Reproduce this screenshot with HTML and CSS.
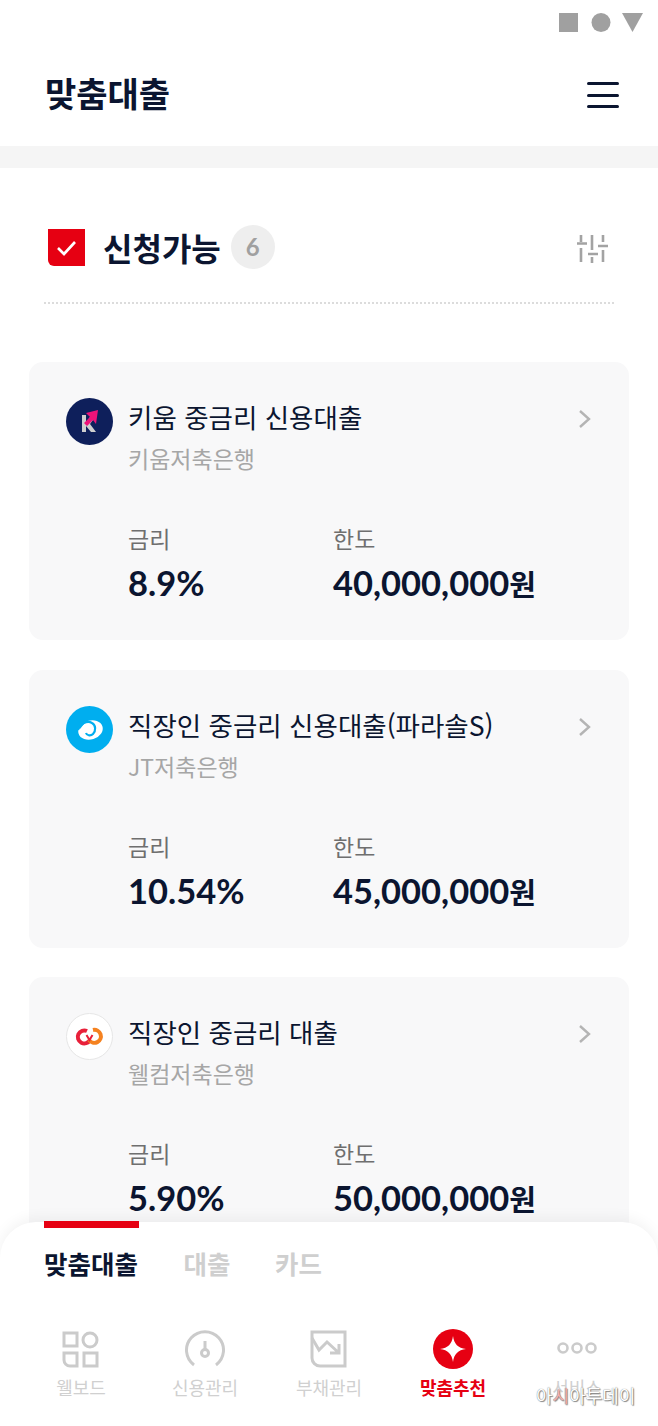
FILE: index.html
```html
<!DOCTYPE html>
<html lang="ko">
<head>
	<meta charset="UTF-8">
	<title>맞춤대출</title>
	<link rel="stylesheet" href="styles.css">
</head>
<body>
	<div class="status">
		<svg width="84" height="20" viewBox="0 0 84 20"><rect x="0" y="0" width="19" height="19" fill="#a0a0a0"/><circle cx="42" cy="9.500" r="9.500" fill="#a0a0a0"/><path d="M63 0h21L73.500 19z" fill="#a0a0a0"/></svg>
	</div>
	<div class="top">
		<h1>맞춤대출</h1>
		<div class="burger"><span></span><span></span><span></span></div>
	</div>
	<div class="band"></div>

	<div class="head">
		<div class="head-left">
			<svg class="check" width="37" height="37" viewBox="0 0 37 37"><path d="M0 0h37v37H6a6 6 0 0 1-6-6z" fill="#e60012"/><path d="M10 19l6 6 11-12" fill="none" stroke="#fff" stroke-width="2.6"/></svg>
			<strong>신청가능</strong>
			<span class="count">6</span>
		</div>
		<svg class="filter" width="32" height="30" viewBox="0 0 32 30" fill="none" stroke="#a3a3a3" stroke-width="2.6"><path d="M4 1v7M0 9.500h10M4 14v14M15 1v15M11 20h10M15 23v6M26 1v7M21 12h10M26 16v12"/></svg>
	</div>

	<div class="list">
		<div class="card">
			<div class="card-top">
				<svg class="logo" width="47" height="47" viewBox="0 0 47 47"><circle cx="23.500" cy="23.500" r="23.500" fill="#0e1f5b"/><path d="M16 17v17h4v-6l5 6h5l-6-8 5-7h-5l-4 6v-8z" fill="#cfcfcf"/><path d="M32 12l-2 14-3-4-6 6-3-3 6-6-4-4z" fill="#ee1379"/></svg>
				<div class="names">
					<div class="name">키움 중금리 신용대출</div>
					<div class="bank">키움저축은행</div>
				</div>
				<svg class="arrow" width="14" height="20" viewBox="0 0 14 20"><path d="M2 2l9 8-9 8" fill="none" stroke="#b4b4b4" stroke-width="2.4"/></svg>
			</div>
			<div class="nums">
				<div class="rate"><span>금리</span><b>8.9%</b></div>
				<div><span>한도</span><b>40,000,000<small>원</small></b></div>
			</div>
		</div>

		<div class="card">
			<div class="card-top">
				<svg class="logo" width="47" height="47" viewBox="0 0 47 47"><circle cx="23.500" cy="23.500" r="23.500" fill="#00aeef"/><ellipse cx="24.500" cy="24" rx="12.500" ry="9.500" fill="#fff" transform="rotate(-18 24.500 24)"/><path d="M12 24c2-6 9-10 14-7 4 2 4 8 1 11-2 2-6 2-7-1" fill="none" stroke="#00aeef" stroke-width="2.200"/><path d="M11 20c2-5 7-8 11-7l-8 10z" fill="#00aeef"/></svg>
				<div class="names">
					<div class="name">직장인 중금리 신용대출(파라솔S)</div>
					<div class="bank">JT저축은행</div>
				</div>
				<svg class="arrow" width="14" height="20" viewBox="0 0 14 20"><path d="M2 2l9 8-9 8" fill="none" stroke="#b4b4b4" stroke-width="2.4"/></svg>
			</div>
			<div class="nums">
				<div class="rate"><span>금리</span><b>10.54%</b></div>
				<div><span>한도</span><b>45,000,000<small>원</small></b></div>
			</div>
		</div>

		<div class="card">
			<div class="card-top">
				<svg class="logo" width="47" height="47" viewBox="0 0 47 47"><circle cx="23.500" cy="23.500" r="23" fill="#fff" stroke="#e6e6e6"/><path d="M21 18a6.500 6.500 0 1 0 3 9" fill="none" stroke="#e8203a" stroke-width="4"/><path d="M27 17a6.500 6.500 0 1 1-4 10" fill="none" stroke="#f58220" stroke-width="4"/><path d="M20.500 22l3 5 3-5" fill="none" stroke="#e8203a" stroke-width="2"/></svg>
				<div class="names">
					<div class="name">직장인 중금리 대출</div>
					<div class="bank">웰컴저축은행</div>
				</div>
				<svg class="arrow" width="14" height="20" viewBox="0 0 14 20"><path d="M2 2l9 8-9 8" fill="none" stroke="#b4b4b4" stroke-width="2.4"/></svg>
			</div>
			<div class="nums">
				<div class="rate"><span>금리</span><b>5.90%</b></div>
				<div><span>한도</span><b>50,000,000<small>원</small></b></div>
			</div>
		</div>
	</div>

	<div class="sheet">
		<div class="tabs">
			<span class="tab on">맞춤대출</span>
			<span class="tab">대출</span>
			<span class="tab">카드</span>
		</div>
		<div class="nav">
			<div class="item">
				<svg width="40" height="40" viewBox="0 0 40 40" fill="none" stroke="#cbcbcb" stroke-width="3"><rect x="3" y="4" width="13" height="13"/><circle cx="29" cy="11" r="7"/><path d="M3 24h13v13H9a6 6 0 0 1-6-6z"/><rect x="23" y="24" width="13" height="13"/></svg>
				<span>웰보드</span>
			</div>
			<div class="item">
				<svg width="40" height="40" viewBox="0 0 40 40" fill="none" stroke="#cbcbcb" stroke-width="3"><path d="M9 36a18.500 18.500 0 1 1 22 0"/><circle cx="20" cy="24" r="3.500"/><path d="M20 12v8"/></svg>
				<span>신용관리</span>
			</div>
			<div class="item">
				<svg width="40" height="40" viewBox="0 0 40 40" fill="none" stroke="#cbcbcb" stroke-width="3"><path d="M3 3h33v34H11a8 8 0 0 1-8-8z"/><path d="M3 9l7 12 8-8 12 11M30 15v9h-9"/></svg>
				<span>부채관리</span>
			</div>
			<div class="item active">
				<svg width="40" height="40" viewBox="0 0 40 40"><circle cx="20" cy="20" r="20" fill="#e60012"/><path d="M20 7c1 8 5 12 13 13-8 1-12 5-13 13-1-8-5-12-13-13 8-1 12-5 13-13z" fill="#fff"/></svg>
				<span>맞춤추천</span>
			</div>
			<div class="item">
				<svg width="40" height="40" viewBox="0 0 40 40" fill="none" stroke="#cbcbcb" stroke-width="2.600"><circle cx="6" cy="19" r="4.500"/><circle cx="20" cy="19" r="4.500"/><circle cx="34" cy="19" r="4.500"/></svg>
				<span>서비스</span>
			</div>
		</div>
		<div class="mark">아<em>시</em>아투데이</div>
	</div>
</body>
</html>
```

FILE: styles.css
```css
*{
	margin:0;
	padding:0;
	box-sizing:border-box;
}
body{
	position:relative;
	height:1426px;
	overflow:hidden;
	background:#fff;
	color:#0b1530;
	font-family:"Lato","Noto Sans CJK KR",sans-serif;
}
.status{
	height:46px;
	padding:13px 15px 0 0;
	display:flex;
	justify-content:flex-end;
}
.top{
	height:100px;
	padding:0 39px 0 45px;
	display:flex;
	align-items:center;
	justify-content:space-between;
}
.top h1{
	margin-top:-8px;
	font-size:34px;
	font-weight:700;
}
.burger{
	width:32px;
	display:flex;
	flex-direction:column;
	gap:8.500px;
	margin-top:-2px;
}
.burger span{
	height:3px;
	background:#0b1530;
	border-radius:2px;
}
.band{
	height:22px;
	background:#f5f5f5;
}
.head{
	margin:0 44px;
	height:136px;
	padding:24px 5px 0 4px;
	display:flex;
	align-items:center;
	justify-content:space-between;
	border-bottom:2px dotted #dcdcdc;
}
.head-left{
	display:flex;
	align-items:center;
}
.head strong{
	margin-left:18px;
	font-size:32px;
	font-weight:700;
}
.filter{
	margin-top:4px;
}
.count{
	margin-left:10px;
	width:44px;
	height:44px;
	border-radius:50%;
	background:#eeeeee;
	color:#a0a0a0;
	font-size:24px;
	font-weight:700;
	line-height:44px;
	text-align:center;
}
.list{
	padding:58px 29px 0;
	display:flex;
	flex-direction:column;
	gap:29.500px;
}
.card{
	height:278px;
	padding:36px 37px 0;
	background:#f8f8f9;
	border-radius:14px;
}
.card-top{
	display:flex;
	align-items:flex-start;
}
.logo{
	flex:none;
}
.names{
	flex:1;
	margin-left:15px;
	font-family:"Noto Sans CJK KR",sans-serif;
}
.name{
	font-size:26.500px;
	line-height:38px;
}
.bank{
	margin-top:4px;
	font-size:23px;
	line-height:36px;
	color:#a6a6a6;
}
.arrow{
	margin:11px 0 0;
}
.nums{
	margin:47px 0 0 62px;
	display:flex;
}
.rate{
	width:205px;
}
.nums span{
	display:block;
	font-size:23px;
	line-height:32px;
	color:#6f6f6f;
}
.nums b{
	display:block;
	margin-top:4px;
	font-size:34.500px;
	line-height:48px;
	font-weight:700;
}
.nums small{
	font-size:29px;
}
.sheet{
	position:absolute;
	left:0;
	right:0;
	top:1222px;
	bottom:0;
	background:#fff;
	border-radius:36px 36px 0 0;
	box-shadow:0 -4px 14px rgba(0,0,0,.05);
}
.tabs{
	display:flex;
	gap:44.500px;
	padding-left:44px;
}
.tab{
	font-size:25.500px;
	font-weight:700;
	line-height:44px;
	color:#cfcfcf;
	padding-top:20px;
}
.tab.on{
	color:#0b1530;
	width:95px;
	border-top:7px solid #e60012;
	margin-top:-1px;
	padding-top:14px;
}
.nav{
	margin-top:43px;
	padding:0 19px;
	display:grid;
	grid-template-columns:repeat(5,1fr);
}
.item{
	display:flex;
	flex-direction:column;
	align-items:center;
}
.item span{
	margin-top:6px;
	font-size:18px;
	line-height:26px;
	color:#d0d0d0;
}
.item.active span{
	color:#e60012;
	font-weight:700;
}
.mark{
	position:absolute;
	left:536px;
	top:162px;
	font-size:18px;
	line-height:24px;
	color:#fff;
	text-shadow:0 0 1px #666,1px 1px 1px #888;
	white-space:nowrap;
}
.mark em{
	font-style:normal;
	color:#f3b0b0;
}
```
